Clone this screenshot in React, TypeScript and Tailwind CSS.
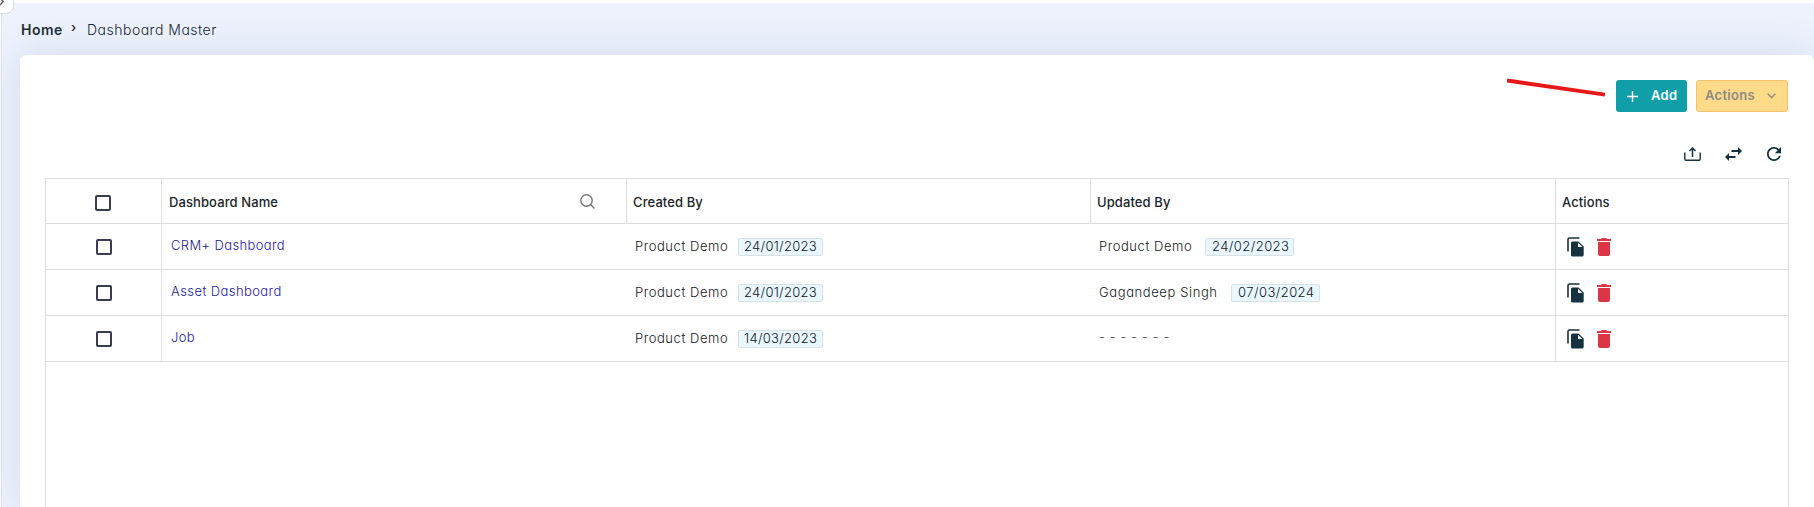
import React from "react";

const rows = [
  { name: "CRM+ Dashboard", nameCls: "tracking-[0.38px]", created: "24/01/2023", updated: "Product Demo", date: "24/02/2023", w: "w-[106px]", t: "tracking-[0.55px]" },
  { name: "Asset Dashboard", nameCls: "tracking-[0.42px]", created: "24/01/2023", updated: "Gagandeep Singh", date: "07/03/2024", w: "w-[132px]", t: "tracking-[0.6px]" },
  { name: "Job", nameCls: "tracking-[0.35px]", created: "14/03/2023", updated: "", date: "", w: "", t: "" },
];

function Box() {
  return <span className="block size-[16px] rounded-[2px] border-2 border-[#3b3e52] bg-white" />;
}

function Badge({ text, wide }: { text: string; wide?: boolean }) {
  return (
    <span className={`flex h-[18px] shrink-0 items-center rounded-[2px] border border-[#d6e2ea] bg-[#eaf7fe] text-[13px] whitespace-nowrap text-[#0b2029] ${wide ? "w-[89px] pl-[6px] tracking-[0.45px]" : "w-[85px] pl-[5px] tracking-[0.3px]"}`}>
      {text}
    </span>
  );
}

function CopyIcon() {
  return (
    <svg className="h-[20px] w-[17px]" viewBox="0 0 17 20" fill="none">
      <path d="M1 14.5V2.5Q1 1 2.5 1H12.5" stroke="#17323f" strokeWidth="1.6" />
      <path d="M5.5 4.5H11.5L16.7 9.5V18Q16.7 19.5 15.2 19.5H5.5Q4 19.5 4 18V6Q4 4.500 5.500 4.500Z" fill="#17323f" />
      <path d="M11 5.800V10H15.300Z" fill="#fff" />
    </svg>
  );
}

function TrashIcon() {
  return (
    <svg className="h-[18px] w-[14px]" viewBox="0 0 14 18" fill="#dc3545">
      <path d="M0 1H4L5 0H9L10 1H14V3H0ZM1 4H13V16Q13 18 11 18H3Q1 18 1 16Z" />
    </svg>
  );
}

const cols = "grid grid-cols-[116px_465px_464px_465px_233px]";

export default function App() {
  return (
    <div className="relative flex h-[507px] w-[1814px] flex-col overflow-hidden bg-white font-['Inter',sans-serif] text-[#212529]">
      <div className="h-[3px] shrink-0" />
      <div className="ml-px flex min-h-0 flex-1 flex-col border-l border-[#dcdfec] bg-[#edf2fd] pl-[18px]">
        <nav className="flex h-[52px] shrink-0 items-center text-[14px] [font-feature-settings:'cv11']">
          <span className="w-[50px] pl-px font-semibold tracking-[0.5px] text-[#1d3038]">Home</span>
          <span className="w-[17px] pb-[2px] pl-px text-[13px] font-medium">›</span>
          <span className="font-[350] tracking-[0.5px] text-[#182830]">Dashboard Master</span>
        </nav>
        <main className="flex min-h-0 flex-1 flex-col rounded-t-[6px] bg-white pr-[25px] pl-[25px] shadow-[0_0_40px_0_rgba(82,90,145,0.15)]">
          <div className="mt-[25px] mr-px flex h-[32px] shrink-0 justify-end gap-[9px] [font-feature-settings:'cv11']">
            <svg className="mt-[-2px] mr-[2px] h-[20px] w-[98px]" viewBox="0 0 98 20">
              <path d="M0 2.500L98 16.700" stroke="#e81818" strokeWidth="3.800" />
            </svg>
            <button className="flex w-[71px] items-center rounded-[3px] bg-[#109fa9] pl-[11px] text-[13px] font-semibold tracking-[0.3px] text-white">
              <svg className="mr-[13px] size-[11px]" viewBox="0 0 11 11">
                <path d="M5.500 0V11M0 5.500H11" stroke="white" strokeWidth="1.400" />
              </svg>
              Add
            </button>
            <button className="flex w-[92px] items-center rounded-[3px] border border-[#fbc06e] bg-[#ffda88] pl-[8px] text-[13px] font-semibold tracking-[0.3px] text-[#8f8b83]">
              <span className="w-[62px] text-left">Actions</span>
              <svg className="h-[6px] w-[9px]" viewBox="0 0 9 6" fill="none">
                <path d="M0.700 0.700L4.500 4.500L8.300 0.700" stroke="#8f8b83" strokeWidth="1.400" />
              </svg>
            </button>
          </div>
          <div className="flex h-[66px] shrink-0 items-center justify-end pt-[18px] pr-[8px] text-[#17323f]">
            <svg className="mr-[24px] h-[14px] w-[17px]" viewBox="0 0 17 14" fill="none" stroke="currentColor">
              <path d="M0.800 5.500V12Q0.800 13.200 2 13.200H15Q16.200 13.200 16.200 12V5.500" strokeWidth="1.400" />
              <path d="M8.500 10V1.500M5.500 4L8.500 1L11.500 4" strokeWidth="1.500" />
            </svg>
            <svg className="mr-[25px] h-[14px] w-[17px]" viewBox="0 0 17 14" fill="currentColor">
              <path d="M6.500 3.100H13V0L17 4L13 8V4.900H6.500ZM10.500 9.100H4V6L0 10L4 14V10.900H10.500Z" />
            </svg>
            <svg className="size-[14px]" viewBox="4 4 16 16" fill="currentColor">
              <path d="M17.650 6.350C16.200 4.900 14.210 4 12 4c-4.420 0-7.990 3.580-7.990 8s3.570 8 7.990 8c3.730 0 6.840-2.550 7.730-6h-2.080c-.820 2.330-3.040 4-5.650 4-3.310 0-6-2.690-6-6s2.690-6 6-6c1.660 0 3.140.690 4.220 1.780L13 11h7V4z" />
            </svg>
          </div>
          <div className="min-h-0 flex-1 border border-b-0 border-[#dcdfe3]">
            <div className={`${cols} h-[45px] border-b border-[#dcdfe3] text-[13px] font-medium`}>
              <div className="flex items-center justify-center border-r border-[#dcdfe3] pt-[4px] pr-[2px]"><Box /></div>
              <div className="flex items-center border-r border-[#dcdfe3] pt-[3px] pl-[7px] tracking-[0.1px]">
                <span className="flex-1">Dashboard Name</span>
                <svg className="mr-[31px] mb-[3px] size-[15px]" viewBox="0 0 15 15" fill="none" stroke="#777" strokeWidth="1.400">
                  <circle cx="6.500" cy="6.500" r="5.700" />
                  <path d="M10.600 10.600L14.500 14.500" />
                </svg>
              </div>
              <div className="flex items-center border-r border-[#dcdfe3] pt-[3px] pl-[6px] tracking-[0.1px]">Created By</div>
              <div className="flex items-center border-r border-[#dcdfe3] pt-[3px] pl-[6px] tracking-[0.1px]">Updated By</div>
              <div className="flex items-center pt-[3px] pl-[6px] tracking-[0.1px]">Actions</div>
            </div>
            {rows.map((r) => (
              <div key={r.name} className={`${cols} h-[46px] border-b border-[#dcdfe3] text-[13px] font-[350] text-[#15181b] [font-feature-settings:'cv11']`}>
                <div className="flex items-center justify-center border-r border-[#dcdfe3]"><Box /></div>
                <div className={`flex items-center pb-[2px] pl-[9px] text-[#1c18a6] ${r.nameCls}`}>{r.name}</div>
                <div className="flex items-center pl-[8px]">
                  <span className="w-[103px] tracking-[0.55px]">Product Demo</span>
                  <Badge text={r.created} />
                </div>
                <div className="flex items-center border-r border-[#dcdfe3] pl-[8px]">
                  {r.updated ? (
                    <>
                      <span className={`${r.w} whitespace-nowrap ${r.t}`}>{r.updated}</span>
                      <Badge text={r.date} wide />
                    </>
                  ) : (
                    <span className="pb-[2px] tracking-[0.6px] text-[#444]">- - - - - - -</span>
                  )}
                </div>
                <div className="flex items-center gap-[13px] pl-[11px]">
                  <CopyIcon />
                  <TrashIcon />
                </div>
              </div>
            ))}
          </div>
        </main>
      </div>
      <div className="absolute top-[-15px] left-[-15px] flex size-[29px] items-end justify-end rounded-[8px] border border-[#d9dce6] bg-white pr-[9px] pb-[7px]">
        <svg className="h-[9px] w-[5px]" viewBox="0 0 5 9" fill="none">
          <path d="M0.500 0.500L4.300 4.500L0.500 8.500" stroke="#666" strokeWidth="1.400" />
        </svg>
      </div>
    </div>
  );
}
